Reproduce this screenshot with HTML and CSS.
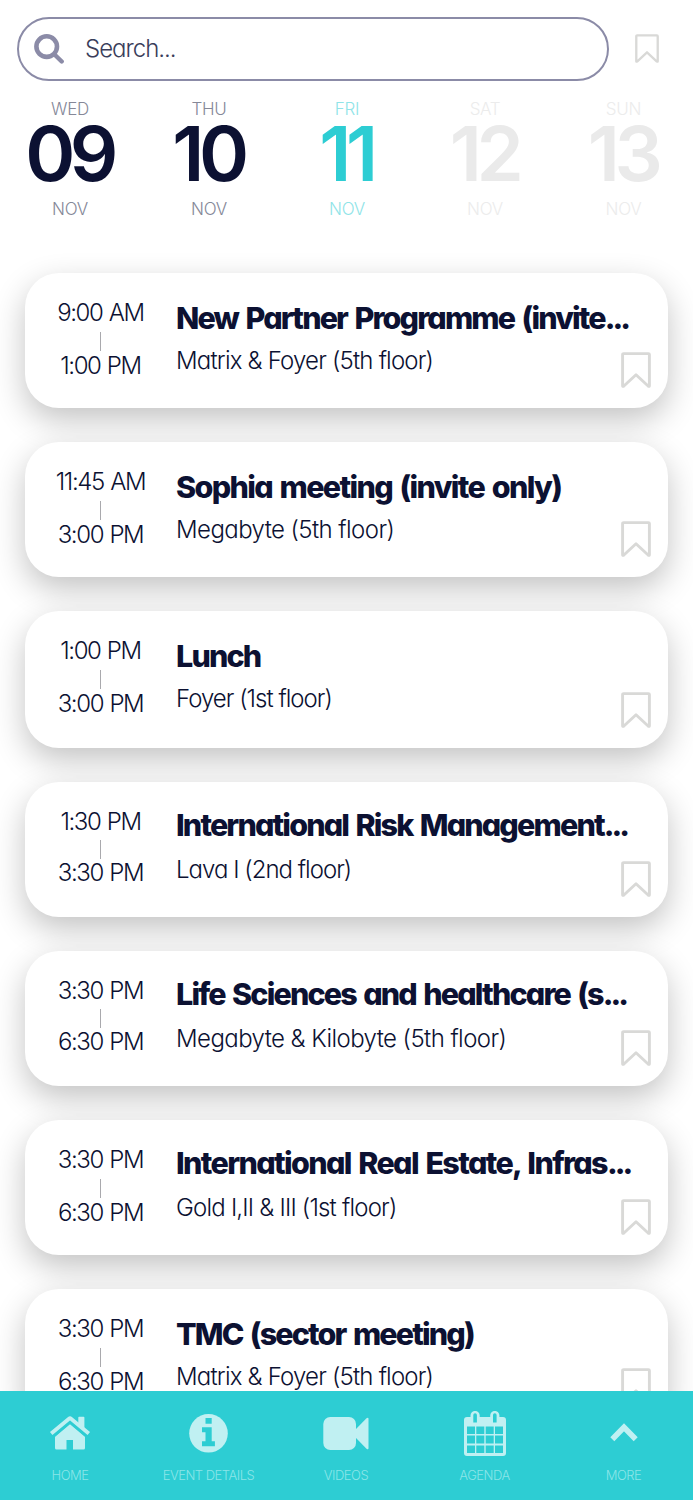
FILE: index.html
```
<!DOCTYPE html>
<html lang="en">
<head>
	<meta charset="utf-8">
	<title>Agenda</title>
	<link rel="stylesheet" href="styles.css">
</head>
<body>
<svg class="sprite" width="0" height="0">
	<symbol id="bookmark" viewBox="0 0 30 36">
		<path d="M1.6 2.6a1 1 0 0 1 1-1h24.8a1 1 0 0 1 1 1v31.2q0 .9-1 .5L15 22.8 2.6 34.3q-1 .4-1-.5z" fill="none" stroke="#d9d9d7" stroke-width="2.9" stroke-linejoin="round"/>
	</symbol>
</svg>

<div class="app">
	<!-- search bar -->
	<div class="search">
		<div class="search__box">
			<svg class="search__icon" viewBox="0 0 30 30">
				<circle cx="12.7" cy="12.6" r="10.3" fill="none" stroke="#8b8ba7" stroke-width="4.6"/>
				<path d="M20.500 20.500L27.700 27.500" stroke="#8b8ba7" stroke-width="4.4" stroke-linecap="round"/>
			</svg>
			<span class="search__text">Search...</span>
		</div>
		<svg class="search__bookmark"><use href="#bookmark"/></svg>
	</div>

	<!-- days -->
	<div class="days">
		<div class="day"><p>WED</p><h2>09</h2><p>NOV</p></div>
		<div class="day"><p>THU</p><h2>10</h2><p>NOV</p></div>
		<div class="day day--active"><p>FRI</p><h2>11</h2><p>NOV</p></div>
		<div class="day day--off"><p>SAT</p><h2>12</h2><p>NOV</p></div>
		<div class="day day--off"><p>SUN</p><h2>13</h2><p>NOV</p></div>
	</div>

	<!-- sessions -->
	<div class="sessions">
		<div class="card">
			<div class="card__time"><span>9:00 AM</span><i></i><span>1:00 PM</span></div>
			<div class="card__info"><h3>New Partner Programme (invite<b>...</b></h3><p>Matrix &amp; Foyer (5th floor)</p></div>
			<svg class="card__bookmark"><use href="#bookmark"/></svg>
		</div>
		<div class="card">
			<div class="card__time"><span>11:45 AM</span><i></i><span>3:00 PM</span></div>
			<div class="card__info"><h3 class="wide">Sophia meeting (invite only)</h3><p class="wide">Megabyte (5th floor)</p></div>
			<svg class="card__bookmark"><use href="#bookmark"/></svg>
		</div>
		<div class="card card--tall">
			<div class="card__time"><span>1:00 PM</span><i></i><span>3:00 PM</span></div>
			<div class="card__info"><h3>Lunch</h3><p class="narrow">Foyer (1st floor)</p></div>
			<svg class="card__bookmark"><use href="#bookmark"/></svg>
		</div>
		<div class="card card--tight card--up">
			<div class="card__time"><span>1:30 PM</span><i></i><span>3:30 PM</span></div>
			<div class="card__info"><h3>International Risk Management<b>...</b></h3><p class="narrow">Lava I (2nd floor)</p></div>
			<svg class="card__bookmark"><use href="#bookmark"/></svg>
		</div>
		<div class="card card--tight card--up">
			<div class="card__time"><span>3:30 PM</span><i></i><span>6:30 PM</span></div>
			<div class="card__info"><h3>Life Sciences and healthcare (s<b>...</b></h3><p class="wide">Megabyte &amp; Kilobyte (5th floor)</p></div>
			<svg class="card__bookmark"><use href="#bookmark"/></svg>
		</div>
		<div class="card card--up">
			<div class="card__time"><span>3:30 PM</span><i></i><span>6:30 PM</span></div>
			<div class="card__info"><h3 class="wide">International Real Estate, Infras<b>...</b></h3><p>Gold I,II &amp; III (1st floor)</p></div>
			<svg class="card__bookmark"><use href="#bookmark"/></svg>
		</div>
		<div class="card">
			<div class="card__time"><span>3:30 PM</span><i></i><span>6:30 PM</span></div>
			<div class="card__info"><h3>TMC (sector meeting)</h3><p>Matrix &amp; Foyer (5th floor)</p></div>
			<svg class="card__bookmark"><use href="#bookmark"/></svg>
		</div>
	</div>

	<!-- bottom nav -->
	<div class="nav">
		<div class="nav__item">
			<svg width="42" height="48" viewBox="0 0 42 48">
				<path d="M6 25.500L21 12.500 36 25.500V37a1.500 1.500 0 0 1-1.500 1.500H24V29h-6.500v9.500H7.500A1.500 1.500 0 0 1 6 37z"/>
				<path class="cut" d="M0 24L21 5.500 42 24v3.500h-4L21 13.300 4 27.500H0z"/>
				<path d="M2.200 22.500L20 7.700q1-.8 2 0L39.800 22.500" fill="none" stroke="#c0f0f2" stroke-width="3.800"/>
				<path d="M29.300 6.500q0-.8.800-.8h4.500q.8 0 .8.800V19l-6.100-5z"/>
			</svg>
			<span>HOME</span>
		</div>
		<div class="nav__item">
			<svg width="40" height="48" viewBox="0 0 40 48">
				<circle cx="19.500" cy="22.300" r="19.300"/>
				<path class="cut" d="M16.500 7h6.200v5.800h-6.200zM13 16.300h9.700v14h3.200v5H13v-5h3.500v-9H13z"/>
			</svg>
			<span>EVENT DETAILS</span>
		</div>
		<div class="nav__item">
			<svg width="46" height="48" viewBox="0 0 46 48">
				<rect x="0.300" y="6" width="32.700" height="33" rx="7"/>
				<path d="M33 18L43.500 7.200q2-1.400 2 .8v29q0 2.200-2 .8L33 27z"/>
			</svg>
			<span>VIDEOS</span>
		</div>
		<div class="nav__item">
			<svg width="42" height="48" viewBox="0 0 42 48">
				<path d="M0 9a3 3 0 0 1 3-3h3.500V4.500a4.600 4.600 0 0 1 9.200 0V6h10.500V4.500a4.600 4.600 0 0 1 9.200 0V6H39a3 3 0 0 1 3 3v33a3 3 0 0 1-3 3H3a3 3 0 0 1-3-3z"/>
				<path class="cut" d="M9.300 4a1.800 1.800 0 0 1 3.600 0v7.500H9.300zM29 4a1.800 1.800 0 0 1 3.600 0v7.500H29zM3 15.500h8v7.500H3zM12.300 15.500h8v7.500h-8zM21.700 15.500h8v7.500h-8zM31 15.500h8v7.500h-8zM3 24.500h8v8H3zM12.300 24.500h8v8h-8zM21.700 24.500h8v8h-8zM31 24.500h8v8h-8zM3 34.500h8v7.500H3zM12.300 34.500h8v7.500h-8zM21.700 34.500h8v7.500h-8zM31 34.500h8v7.500h-8z"/>
			</svg>
			<span>AGENDA</span>
		</div>
		<div class="nav__item">
			<svg width="28" height="48" viewBox="0 0 28 48">
				<path d="M2.300 28.200L14 16.200l11.700 12" fill="none" stroke="#c0f0f2" stroke-width="5.600" stroke-linejoin="miter"/>
			</svg>
			<span>MORE</span>
		</div>
	</div>
</div>
</body>
</html>
```
FILE: styles.css
```
*{
	margin: 0;
	padding: 0;
	box-sizing: border-box;
}

body{
	background-color: #fff;
	font-family: Inter, "Open Sans", sans-serif;
	font-feature-settings: "cv11";
	color: #0c1132;
}

.sprite{
	display: block;
}

.app{
	display: flex;
	flex-direction: column;
	height: 1500px;
	overflow: hidden;
	white-space: nowrap;
}

/* search bar */
.search{
	flex: none;
	display: flex;
	align-items: center;
	padding: 17px 0 0 17px;
}

.search__box{
	display: flex;
	align-items: center;
	width: 592px;
	height: 64px;
	border: 2px solid #8b8ba7;
	border-radius: 32px;
	padding: 0 0 1px 15px;
}

.search__icon{
	width: 30px;
	height: 30px;
}

.search__text{
	margin-left: 21px;
	font-size: 24px;
	font-weight: 300;
	line-height: 30px;
	color: #3a3d5a;
	letter-spacing: -1px;
}

.search__bookmark{
	width: 24px;
	height: 29px;
	margin: 0 0 2px 26px;
}

/* days */
.days{
	flex: none;
	display: grid;
	grid-template-columns: 140px 138px 138px 138px 139px;
	height: 152px;
	padding-top: 18px;
	text-align: center;
}

.day p{
	font-size: 17px;
	font-weight: 300;
	line-height: 20px;
	color: #858898;
	letter-spacing: -.3px;
}

.day h2{
	font-size: 76px;
	font-weight: 560;
	line-height: 68px;
	margin: 0 0 12px -2px;
	letter-spacing: -5.5px;
}

.day--active h2{ color: #2dcdd3; }
.day--active p{ color: #90e4e8; }
.day--off h2{ color: #eaeaea; }
.day--off p{ color: #ececec; }

/* sessions */
.sessions{
	flex: 1;
	min-height: 0;
	overflow: hidden;
	display: flex;
	flex-direction: column;
	gap: 34px;
	padding: 40px 25px 0;
}

.card{
	position: relative;
	flex: none;
	display: flex;
	height: 135px;
	border-radius: 34px;
	background-color: #fff;
	box-shadow: 0 12px 32px rgba(0,0,0,.24);
}

.card--tall{
	height: 137px;
}

.card__time{
	width: 151px;
	padding-top: 25px;
	display: flex;
	flex-direction: column;
	align-items: center;
	font-size: 24px;
	font-weight: 300;
	line-height: 30px;
	letter-spacing: -1.4px;
	word-spacing: 1px;
}

.card__time i{
	width: 1px;
	height: 19px;
	margin: 4px 0 0;
	background-color: #a9a9ad;
}

.card--tight i{
	margin: 3px 0 -1px;
}

.card__info{
	padding-top: 25px;
}

.card__info h3{
	font-size: 30.5px;
	font-weight: 800;
	line-height: 40px;
	letter-spacing: -1.85px;
	word-spacing: 2.5px;
}

.card__info h3.wide{
	letter-spacing: -1.65px;
}

.card__info h3 b{
	font-weight: 800;
	letter-spacing: -3px;
}

.card__info p{
	margin-top: 8px;
	font-size: 24px;
	font-weight: 300;
	line-height: 30px;
	letter-spacing: -.8px;
}

.card__info p.wide{
	letter-spacing: -.57px;
}

.card__info p.narrow{
	letter-spacing: -.98px;
}

.card--up .card__info{
	padding-top: 23px;
}

.card--up .card__info p{
	margin-top: 10px;
}

.card__bookmark{
	position: absolute;
	right: 17px;
	bottom: 20px;
	width: 30px;
	height: 36px;
}

/* bottom nav */
.nav{
	flex: none;
	position: relative;
	display: grid;
	grid-template-columns: 140px 137px 138px 139px 139px;
	height: 109px;
	padding-top: 20px;
	background-color: #2dcdd3;
}

.nav__item{
	display: flex;
	flex-direction: column;
	align-items: center;
}

.nav__item svg{
	fill: #c0f0f2;
}

.nav__item .cut{
	fill: #2dcdd3;
}

.nav__item span{
	margin-top: 7px;
	font-size: 13px;
	font-weight: 300;
	line-height: 18px;
	color: #8be5e8;
	letter-spacing: -.5px;
}
```
